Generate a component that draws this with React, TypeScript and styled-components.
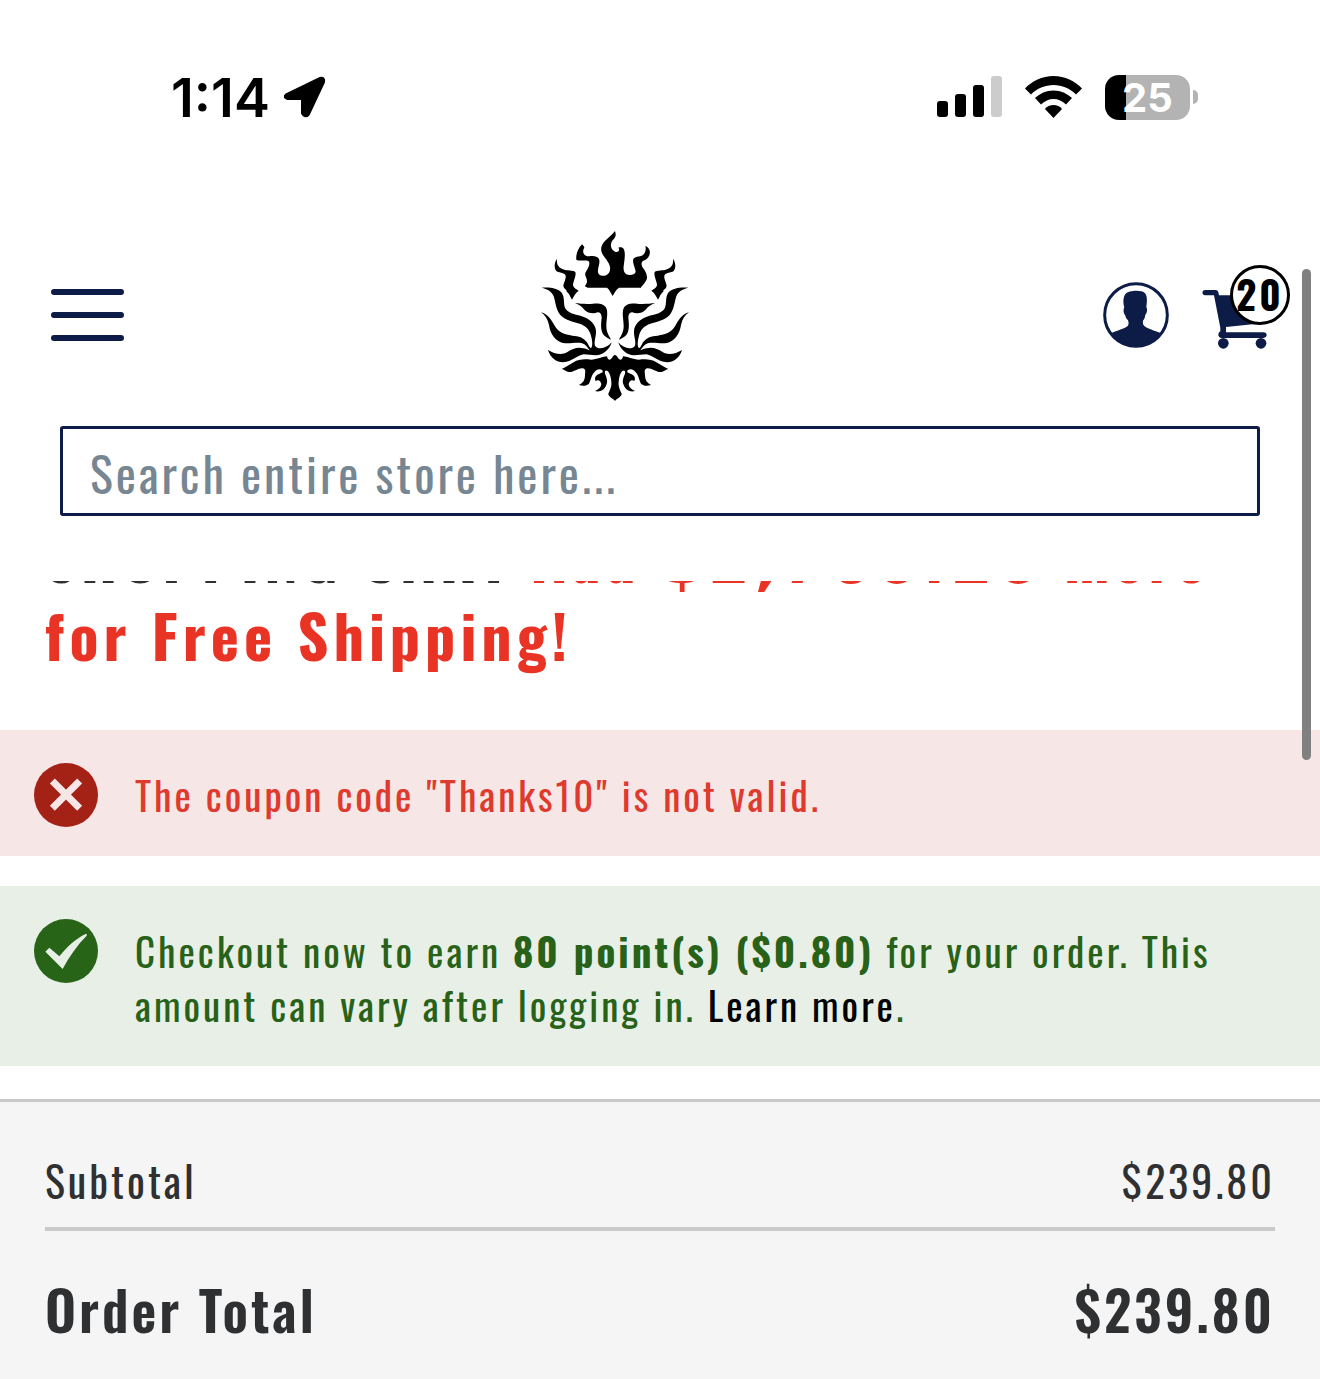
import React from "react";
import styled, { createGlobalStyle } from "styled-components";

const navy = "#0c1c47";
const condensed = `Oswald, "Liberation Sans Narrow", "Arial Narrow", "Liberation Sans", sans-serif`;

const GlobalStyle = createGlobalStyle`
  * { box-sizing: border-box; }
  body {
    margin: 0;
    background: #fff;
    font-family: ${condensed};
    letter-spacing: 3px;
    color: #2f3032;
  }
`;

const Page = styled.div`
  position: relative;
  overflow: hidden;
`;

const Header = styled.header`
  position: relative;
  z-index: 1;
  background: #fff;
  padding-bottom: 65px;
`;

const StatusBar = styled.div`
  display: flex;
  justify-content: space-between;
  align-items: center;
  padding: 60px 122px 0 171px;
  height: 134px;
  font-family: Inter, sans-serif;
  letter-spacing: normal;
  color: #000;
`;

const StatusGroup = styled.div<{ $gap: number }>`
  display: flex;
  align-items: center;
  gap: ${(p) => p.$gap}px;
`;

const Time = styled.span`
  padding-top: 2px;
  font-size: 54px;
  line-height: 74px;
  font-weight: 600;
`;

const Battery = styled.div`
  display: flex;
  align-items: center;
  gap: 3px;
`;

const BatteryBody = styled.span`
  width: 85px;
  height: 45px;
  border-radius: 14px;
  background: linear-gradient(to right, #000 25%, #b3b3b3 25%);
  color: #fff;
  font-size: 40px;
  line-height: 46px;
  font-weight: 700;
  text-align: center;
`;

const BatteryTip = styled.span`
  width: 5px;
  height: 14px;
  border-radius: 0 7px 7px 0;
  background: #b3b3b3;
`;

const NavBar = styled.nav`
  display: flex;
  justify-content: space-between;
  align-items: center;
  height: 179px;
  margin-top: 91px;
  padding: 0 30px 0 51px;
`;

const IconButton = styled.button`
  display: flex;
  padding: 0;
  border: 0;
  background: none;
  color: ${navy};
`;

const IconLink = styled.a`
  display: flex;
  position: relative;
  color: ${navy};
`;

const Actions = styled.div`
  display: flex;
  align-items: center;
  gap: 33px;
  height: 90px;
`;

const CartLink = styled(IconLink)`
  width: 88px;
  padding-top: 8px;
`;

const CartCount = styled.span`
  position: absolute;
  top: -16px;
  right: 0;
  width: 60px;
  height: 60px;
  border: 3px solid #000;
  border-radius: 50%;
  background: #fff;
  color: #000;
  font-size: 39px;
  line-height: 51px;
  font-weight: 700;
  text-align: center;
`;

const Search = styled.form`
  display: flex;
  margin: 22px 60px 0;
`;

const SearchInput = styled.input`
  flex: 1;
  min-width: 0;
  height: 90px;
  padding: 2px 27px 0;
  border: 3px solid ${navy};
  border-radius: 3px;
  background: #fff;
  font-family: inherit;
  font-size: 48px;
  letter-spacing: inherit;
  color: ${navy};
  &::placeholder { color: #768692; opacity: 1; }
`;

const Title = styled.h1`
  margin: -64px 0 0;
  padding: 0 45px;
  font-size: 60px;
  line-height: 78px;
  letter-spacing: 5px;
  font-weight: 700;
`;

const ShippingNote = styled.strong`
  color: #e93425;
`;

const Amount = styled.span`
  font-family: "DejaVu Sans", sans-serif;
  line-height: 1;
`;

const Messages = styled.section`
  display: flex;
  flex-direction: column;
  gap: 30px;
  margin-top: 57px;
`;

const Message = styled.div<{ $tone: "error" | "success" }>`
  display: flex;
  align-items: flex-start;
  gap: 37px;
  padding: 33px 34px 29px;
  background: ${(p) => (p.$tone === "error" ? "#f7e6e6" : "#e7efe6")};
  color: ${(p) => (p.$tone === "error" ? "#de3a2d" : "#286118")};
  svg { flex: none; }
`;

const MessageText = styled.p`
  margin: 0;
  padding: 4px 0 6px;
  font-size: 39px;
  line-height: 54px;
`;

const LearnMore = styled.a`
  color: #000;
  text-decoration: none;
`;

const Summary = styled.section`
  margin-top: 33px;
  padding: 30px 45px 16px;
  border-top: 3px solid #c9c9c9;
  background: #f5f5f5;
`;

const Totals = styled.table`
  width: 100%;
  border-collapse: collapse;
`;

const TotalRow = styled.tr<{ $grand?: boolean }>`
  font-size: ${(p) => (p.$grand ? 54 : 42)}px;
  font-weight: ${(p) => (p.$grand ? 600 : 400)};
  height: ${(p) => (p.$grand ? 158 : 97)}px;
  border-bottom: ${(p) => (p.$grand ? "0" : "4px solid #c9c9c9")};
  th, td { padding: 0; font-weight: inherit; text-align: left; }
  td { text-align: right; }
`;

const ScrollThumb = styled.div`
  position: absolute;
  z-index: 2;
  top: 269px;
  right: 9px;
  width: 9px;
  height: 491px;
  border-radius: 5px;
  background: #808080;
`;

const ManeHalf = () => (
  <>
    <path d="M82 102C74 112 72 128 80 138C88 144 104 142 108 152C110 164 98 178 102 186C106 194 114 196 110 199C118 204 122 216 127 224C132 214 138 202 147 197C138 192 130 188 130 178C132 166 138 156 138 144C136 134 118 138 104 134C88 130 80 120 82 102Z" />
    <path d="M36 188C52 192 66 198 72 214C78 232 78 252 92 270C106 286 130 290 150 296C168 302 180 314 184 332C188 348 190 362 184 370C178 366 178 362 172 352C160 336 148 334 128 332C104 328 86 322 76 304C66 286 54 266 34 262C46 270 54 282 58 300C62 326 76 348 100 354C124 358 148 348 164 358C172 364 176 372 180 376C174 374 168 370 160 370C144 366 130 370 112 382C96 392 72 386 55 375C62 398 80 412 100 412C128 410 140 392 162 388C180 388 200 394 214 388C232 380 242 366 246 352C232 370 206 376 196 362C192 350 200 334 199 318C198 300 184 284 162 276C142 268 120 268 108 252C100 240 106 222 98 206C88 190 62 186 36 188Z" />
    <path d="M136 234C150 240 158 246 164 254C174 264 190 268 204 262C212 262 216 268 216 278C214 296 212 316 222 330C230 338 238 342 244 344C238 332 230 322 230 304C230 284 236 264 230 250C224 236 206 234 190 236C170 238 152 236 136 234Z" />
    <path d="M96 432C108 428 120 418 132 412C146 402 166 402 184 404C202 404 220 394 232 394C234 404 240 408 246 400C249 396 251 390 257 390L257 527C248 520 236 514 236 506C240 496 247 484 245 470C244 456 240 444 234 438C228 434 224 438 226 446C230 456 236 468 230 480C224 496 210 502 196 498C206 494 214 488 215 478C214 468 206 462 198 468C193 458 198 450 210 446C216 444 222 442 218 436C210 430 200 434 194 442C184 452 184 466 178 476C172 482 160 484 148 480C160 474 166 464 166 452C166 440 170 434 160 430C144 428 128 446 114 440C106 438 104 434 96 432Z" />
  </>
);

const LionLogo = () => (
  <svg width="170" height="179" viewBox="-2 0 510 537" fill="#000" aria-hidden="true">
    <path d="M157 58C145 70 138 88 140 104C150 110 165 104 176 108C184 115 175 130 168 142C163 152 172 158 172 168C172 178 166 180 166 184L174 188L232 188C240 194 244 206 249 213C254 206 258 194 268 188L334 188C338 180 348 174 352 160C353 146 345 136 338 126C334 118 334 108 346 105C358 100 364 84 359 74C355 66 350 63 347 62C350 72 347 82 342 88C336 97 318 92 311 102C307 114 318 130 318 140C316 150 300 152 290 148C280 140 281 128 283 116C285 100 288 84 282 72C280 67 272 65 266 68C273 76 264 84 256 80C246 76 240 64 246 50C250 42 263 38 256 18C248 28 238 36 228 46C216 58 210 72 218 86C224 98 238 110 241 126C243 140 236 150 226 152C212 154 203 148 205 134C206 124 212 112 208 102C202 92 190 92 178 94C162 94 156 80 164 68C164 64 158 60 157 58Z" />
    <ManeHalf />
    <g transform="translate(512 0) scale(-1 1)"><ManeHalf /></g>
  </svg>
);

export default function App() {
  return (
    <Page>
      <GlobalStyle />
      <Header>
        <StatusBar>
          <StatusGroup $gap={13}>
            <Time>1:14</Time>
            <svg width="43" height="43" viewBox="0 0 43 43" aria-hidden="true">
              <path d="M4 19L37 3Q41 2 40 6L25 38Q22 41 20 37V22H5Q1 21 4 19Z" fill="#000" stroke="#000" strokeWidth="4" strokeLinejoin="round" />
            </svg>
          </StatusGroup>
          <StatusGroup $gap={23}>
            <svg width="65" height="42" viewBox="0 0 65 42" aria-hidden="true">
              <rect x="0" y="25" width="11" height="16" rx="3" />
              <rect x="18" y="18" width="11" height="23" rx="3" />
              <rect x="36" y="9" width="11" height="32" rx="3" />
              <rect x="54" y="0" width="11" height="41" rx="3" fill="#ccc" />
            </svg>
            <svg width="57" height="43" viewBox="0 0 57 43" aria-hidden="true">
              <path d="M28.500 0C17 0 7 5 0 12.500L6 18.500C12 12.500 20 9 28.500 9S45 12.500 51 18.500L57 12.500C50 5 40 0 28.500 0Z" />
              <path d="M28.500 14.500C21 14.500 15 17.500 10 22L16 28.500C19.500 25 24 23 28.500 23S37.500 25 41 28.500L47 22C42 17.500 36 14.500 28.500 14.500Z" />
              <path d="M28.500 29C25 29 22 30.500 20 33L28.500 42L37 33C35 30.500 32 29 28.500 29Z" />
            </svg>
            <Battery>
              <BatteryBody>25</BatteryBody>
              <BatteryTip />
            </Battery>
          </StatusGroup>
        </StatusBar>
        <NavBar>
          <IconButton type="button" aria-label="Menu">
            <svg width="73" height="54" viewBox="0 0 73 54" stroke="currentColor" strokeWidth="6" strokeLinecap="round" aria-hidden="true">
              <path d="M3 4H70M3 27H70M3 50H70" />
            </svg>
          </IconButton>
          <IconLink href="#home" aria-label="Home"><LionLogo /></IconLink>
          <Actions>
            <IconLink href="#account" aria-label="Account">
              <svg width="66" height="66" viewBox="0 0 198 198" aria-hidden="true">
                <circle cx="99" cy="99" r="94" fill="#fff" stroke="currentColor" strokeWidth="9" />
                <path d="M26 153C42 145 64 141 74 132C78 128 77 120 75 115C69 110 68 104 66 98C62 96 60 82 64 76C60 62 60 44 68 35C76 26 116 22 126 34C134 42 132 62 130 76C134 82 132 94 127 98C126 106 124 111 120 116C119 122 120 128 124 132C134 141 154 145 172 153C158 180 130 195 99 195S40 180 26 153Z" fill="currentColor" />
              </svg>
            </IconLink>
            <CartLink href="#cart" aria-label="Cart, 20 items">
              <svg width="66" height="60" viewBox="0 0 198 180" fill="currentColor" aria-hidden="true">
                <path d="M9 3H40Q48 3 49 10L51 19H190L166 104L72 114V130H184Q194 131 194 138T184 147H60Q49 146 49 137Q49 130 55 127V116L36 19H9Q1 18 1 11T9 3Z" />
                <circle cx="64" cy="163" r="16" />
                <circle cx="177" cy="163" r="16" />
              </svg>
              <CartCount>20</CartCount>
            </CartLink>
          </Actions>
        </NavBar>
        <Search role="search">
          <SearchInput type="text" aria-label="Search" placeholder="Search entire store here..." />
        </Search>
      </Header>
      <main>
        <Title>
          SHOPPING CART{" "}
          <ShippingNote>
            Add <Amount>$2,760.20</Amount> more for Free Shipping!
          </ShippingNote>
        </Title>
        <Messages>
          <Message $tone="error" role="alert">
            <svg width="64" height="64" viewBox="0 0 192 192" aria-hidden="true">
              <circle cx="96" cy="96" r="96" fill="#a42115" />
              <path d="M55 54L137 136M137 54L55 136" stroke="#f7e6e6" strokeWidth="21" />
            </svg>
            <MessageText>The coupon code "Thanks10" is not valid.</MessageText>
          </Message>
          <Message $tone="success" role="status">
            <svg width="64" height="64" viewBox="0 0 192 192" aria-hidden="true">
              <circle cx="96" cy="96" r="96" fill="#286418" />
              <path d="M34 98L46 86L76 112C98 84 124 60 156 44Q160 46 158 50C130 78 106 112 86 150Z" fill="#e7efe6" />
            </svg>
            <MessageText>
              Checkout now to earn <strong>80 point(s) ($0.80)</strong> for your order. This amount can vary after
              logging in. <LearnMore href="#rewards">Learn more</LearnMore>.
            </MessageText>
          </Message>
        </Messages>
        <Summary>
          <Totals>
            <tbody>
              <TotalRow>
                <th scope="row">Subtotal</th>
                <td>$239.80</td>
              </TotalRow>
              <TotalRow $grand>
                <th scope="row">Order Total</th>
                <td>$239.80</td>
              </TotalRow>
            </tbody>
          </Totals>
        </Summary>
      </main>
      <ScrollThumb />
    </Page>
  );
}
